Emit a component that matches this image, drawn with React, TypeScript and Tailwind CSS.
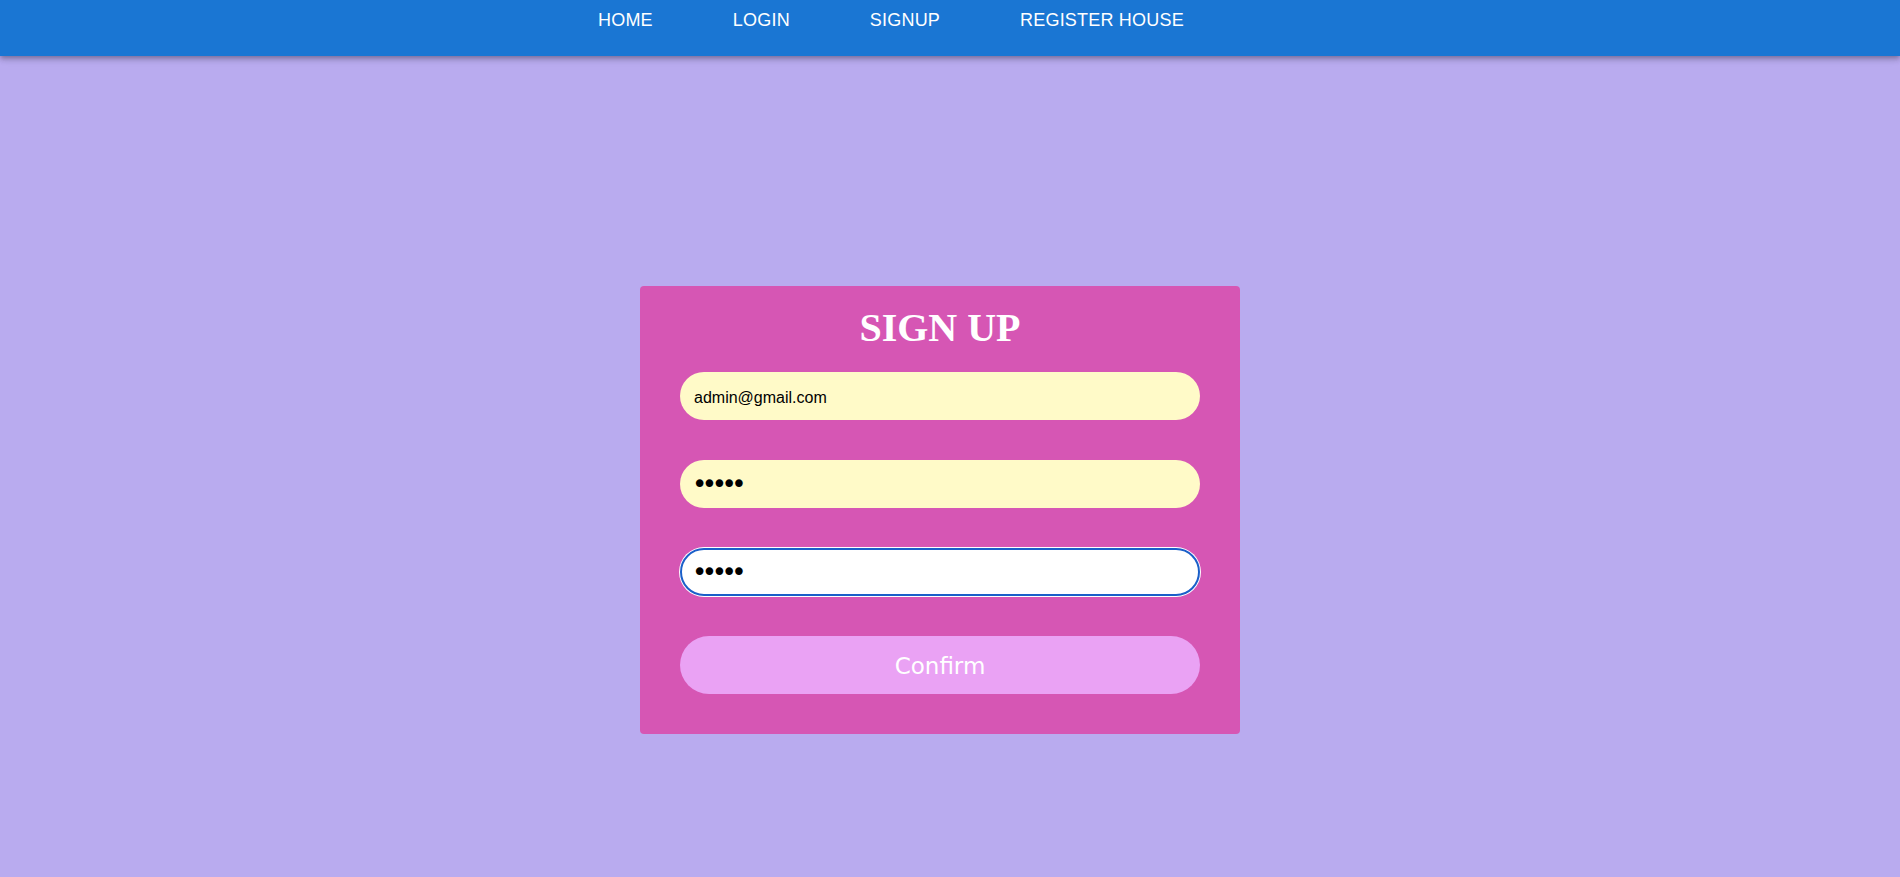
export default function App() {
  const links = ['HOME', 'LOGIN', 'SIGNUP', 'REGISTER HOUSE']

  return (
    <div className="min-h-screen bg-[#b9abef]" style={{ fontFamily: '"Liberation Sans", Arial, sans-serif' }}>
      {/* top bar */}
      <header className="h-[56px] bg-[#1a76d3] shadow-[0_2px_4px_-1px_rgba(0,0,0,0.2),0_4px_5px_0_rgba(0,0,0,0.14),0_1px_10px_0_rgba(0,0,0,0.12)]">
        <nav className="flex pl-[558px] pt-[10px]">
          {links.map((link) => (
            <a key={link} href="#" className="px-[40px] text-[18px] leading-[21px] tracking-[0.2px] text-white">
              {link}
            </a>
          ))}
        </nav>
      </header>

      {/* sign up card */}
      <div className="ml-[640px] mt-[230px] w-[600px] rounded bg-[#d656b4] px-[40px] pt-[19px] pb-[40px]">
        <h1
          className="mb-[21px] text-center text-[40px] font-bold leading-[46px] text-white"
          style={{ fontFamily: '"Liberation Serif", "Times New Roman", serif' }}
        >
          SIGN UP
        </h1>
        <form className="flex flex-col gap-[40px]" onSubmit={(e) => e.preventDefault()}>
          <input
            type="email"
            defaultValue="admin@gmail.com"
            className="h-[48px] w-full rounded-full bg-[#fffac8] px-[14px] pt-[4px] text-[16px] text-black outline-none"
          />
          <input
            type="password"
            defaultValue="admin"
            className="h-[48px] w-full rounded-full bg-[#fffac8] px-[12px] text-[26px] tracking-[-5.5px] text-black outline-none"
            style={{ fontFamily: '"DejaVu Sans", sans-serif' }}
          />
          <input
            type="password"
            defaultValue="admin"
            autoFocus
            className="h-[48px] w-full rounded-full border-2 border-[#1a5fc9] bg-white px-[10px] text-[26px] tracking-[-5.5px] text-black caret-black shadow-[0_0_0_1px_#ffffff] outline-none"
            style={{ fontFamily: '"DejaVu Sans", sans-serif' }}
          />
          <button
            type="submit"
            className="h-[58px] w-full rounded-full bg-[#eaa2f4] pt-[3px] text-[23px] text-white"
            style={{ fontFamily: '"DejaVu Sans", sans-serif' }}
          >
            Confirm
          </button>
        </form>
      </div>
    </div>
  )
}
